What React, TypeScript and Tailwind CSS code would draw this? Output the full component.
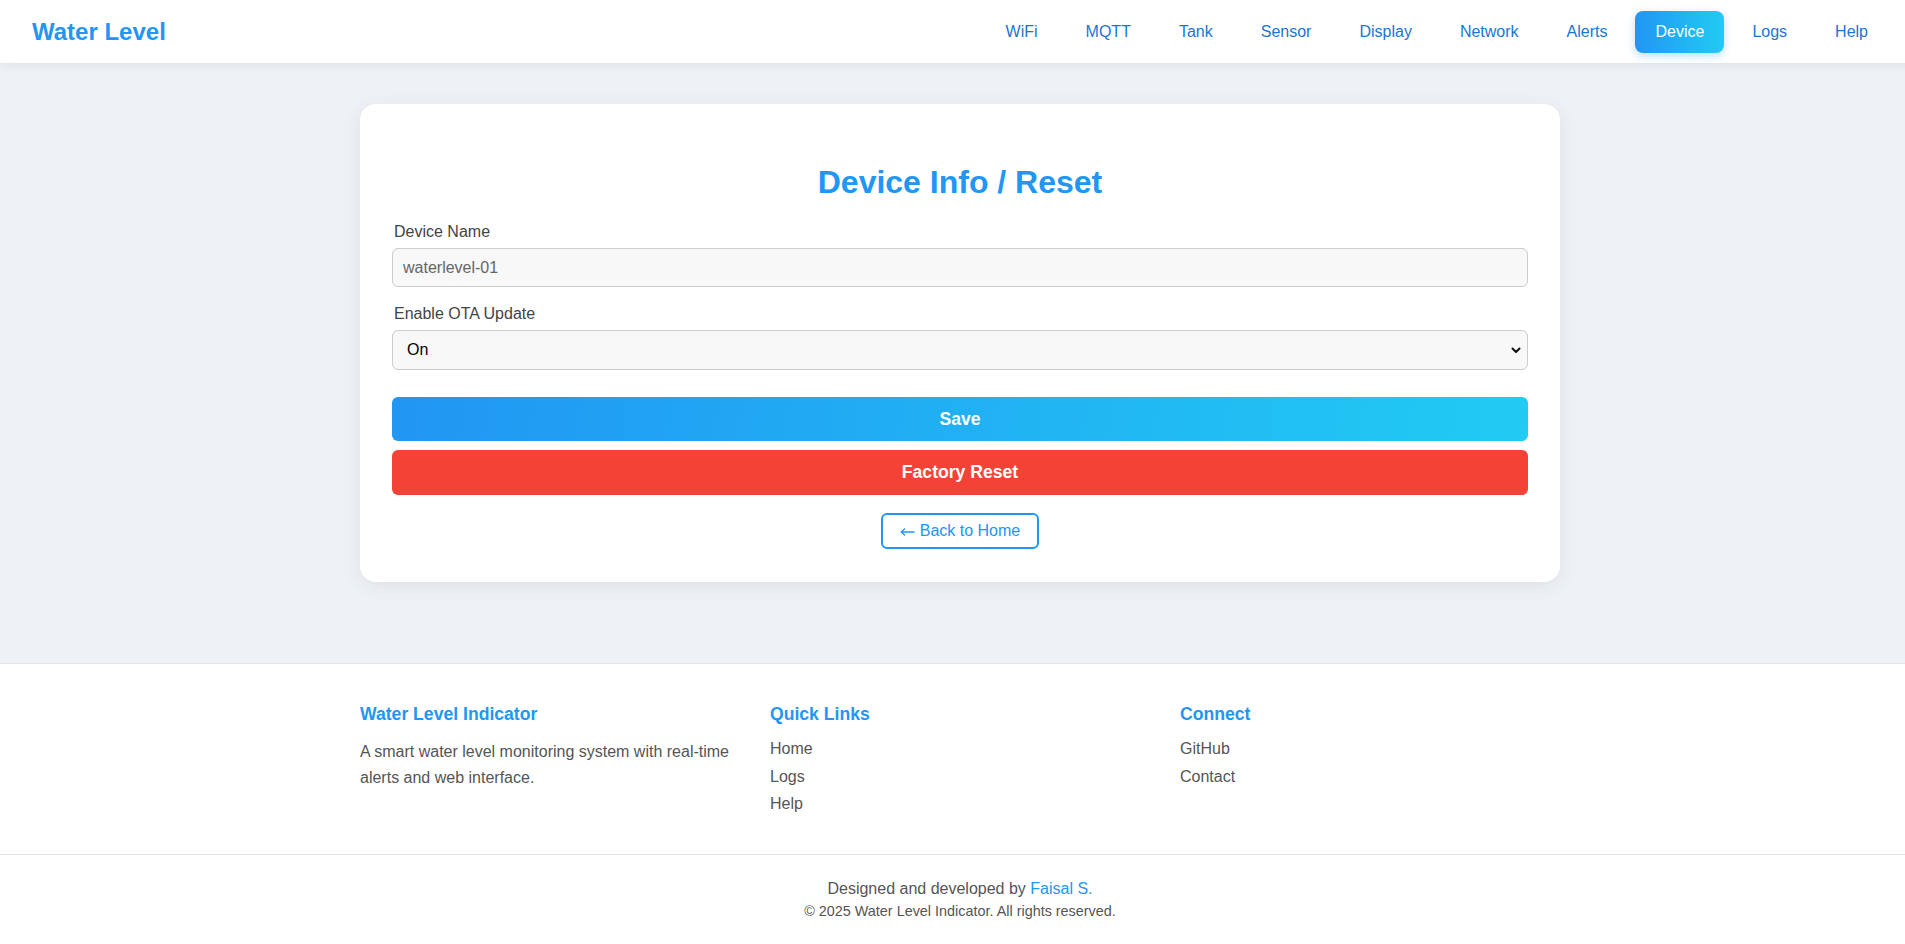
import React from "react";

const FONT = { fontFamily: '"Liberation Sans", Arial, Helvetica, sans-serif' };

const navItems = ["WiFi", "MQTT", "Tank", "Sensor", "Display", "Network", "Alerts", "Device", "Logs", "Help"];

export default function App() {
  return (
    <div className="w-full h-screen overflow-hidden bg-white" style={FONT}>
      <div className="w-[1920px]">
        {/* Header */}
        <header className="relative z-10 h-[63px] bg-white px-8 flex items-center justify-between shadow-[0_2px_10px_rgba(0,0,0,0.07)]">
          <div className="text-[24px] font-bold text-[#2196f3] leading-none">Water Level</div>
          <nav className="flex items-center gap-2">
            {navItems.map((item) =>
              item === "Device" ? (
                <a
                  key={item}
                  className="px-5 py-3 text-[16px] leading-[18px] rounded-lg text-white bg-[linear-gradient(90deg,#2196f3,#21cbf3)] shadow-[0_3px_8px_rgba(33,150,243,0.3)]"
                >
                  {item}
                </a>
              ) : (
                <a key={item} className="px-5 py-3 text-[16px] leading-[18px] text-[#1976d2]">
                  {item}
                </a>
              )
            )}
          </nav>
        </header>

        {/* Main */}
        <main className="bg-[#eef2f7] pt-[41px] pb-[81px]">
          <div className="w-[1200px] mx-auto bg-white rounded-2xl px-8 pt-8 pb-[33px] shadow-[0_4px_20px_rgba(0,0,0,0.07)]">
            <h2 className="mt-[28px] mb-[23px] text-center text-[32px] leading-[36px] font-bold text-[#2196f3]">
              Device Info / Reset
            </h2>
            <label className="block text-[16px] leading-[18px] text-[#444] mb-[7px] pl-[2px]">Device Name</label>
            <input
              readOnly
              value="waterlevel-01"
              className="block w-full h-[39px] px-[10px] rounded-md border border-[#ccc] bg-[#f8f8f8] text-[16px] text-[#666] outline-none mb-[18px]"
              style={FONT}
            />
            <label className="block text-[16px] leading-[18px] text-[#444] mb-[7px] pl-[2px]">Enable OTA Update</label>
            <div className="relative mb-[27px]">
              <select
                defaultValue="On"
                className="block w-full h-[40px] pl-[14px] pr-8 rounded-md border border-[#ccc] bg-[#f8f8f8] text-[16px] text-black appearance-none outline-none"
                style={FONT}
              >
                <option>On</option>
                <option>Off</option>
              </select>
              <svg
                className="absolute right-[6px] top-1/2 -translate-y-1/2 pointer-events-none"
                width="12"
                height="12"
                viewBox="0 0 12 12"
              >
                <path d="M2.5 4.5 L6 8 L9.5 4.5" fill="none" stroke="#111" strokeWidth="2" strokeLinecap="round" strokeLinejoin="round" />
              </svg>
            </div>
            <button className="block w-full h-[44px] rounded-md text-white font-bold text-[17.6px] bg-[linear-gradient(100deg,#2196f3,#21cbf3)]">
              Save
            </button>
            <button className="block w-full h-[45px] mt-[9px] rounded-md text-white font-bold text-[17.6px] bg-[#f44336]">
              Factory Reset
            </button>
            <div className="flex justify-center mt-[18px]">
              <a className="h-[36px] w-[158px] flex items-center justify-center rounded-md border-2 border-[#2196f3] text-[#2196f3] text-[16px]">
                <svg className="mr-[5px] translate-y-[1px]" width="15" height="10" viewBox="0 0 15 10">
                  <path d="M14.5 5 H1.5 M5 1.5 L1.2 5 L5 8.5" fill="none" stroke="#2196f3" strokeWidth="1.3" />
                </svg>
                Back to Home
              </a>
            </div>
          </div>
        </main>

        {/* Footer */}
        <footer className="bg-white border-t border-[#e3e6ea]">
          <div className="w-[1200px] mx-auto grid grid-cols-3 gap-[30px] pt-[40px] pb-[32px]">
            <div>
              <h3 className="text-[17.6px] leading-[21px] font-bold text-[#2196f3] mb-[14px]">Water Level Indicator</h3>
              <p className="text-[16px] leading-[25.6px] text-[#555]">
                A smart water level monitoring system with real-time alerts and web interface.
              </p>
            </div>
            <div>
              <h3 className="text-[17.6px] leading-[21px] font-bold text-[#2196f3] mb-[14px]">Quick Links</h3>
              <ul>
                {["Home", "Logs", "Help"].map((l) => (
                  <li key={l} className="text-[16px] leading-[19.7px] mb-[8px] text-[#555]">
                    {l}
                  </li>
                ))}
              </ul>
            </div>
            <div>
              <h3 className="text-[17.6px] leading-[21px] font-bold text-[#2196f3] mb-[14px]">Connect</h3>
              <ul>
                {["GitHub", "Contact"].map((l) => (
                  <li key={l} className="text-[16px] leading-[19.7px] mb-[8px] text-[#555]">
                    {l}
                  </li>
                ))}
              </ul>
            </div>
          </div>
          <div className="border-t border-[#e3e3e3] pt-[22px] pb-[30px] text-center text-[#555]">
            <p className="text-[16px] leading-[24px]">
              Designed and developed by <span className="text-[#2196f3]">Faisal S.</span>
            </p>
            <p className="text-[14.4px] leading-[20px]">© 2025 Water Level Indicator. All rights reserved.</p>
          </div>
        </footer>
      </div>
    </div>
  );
}
